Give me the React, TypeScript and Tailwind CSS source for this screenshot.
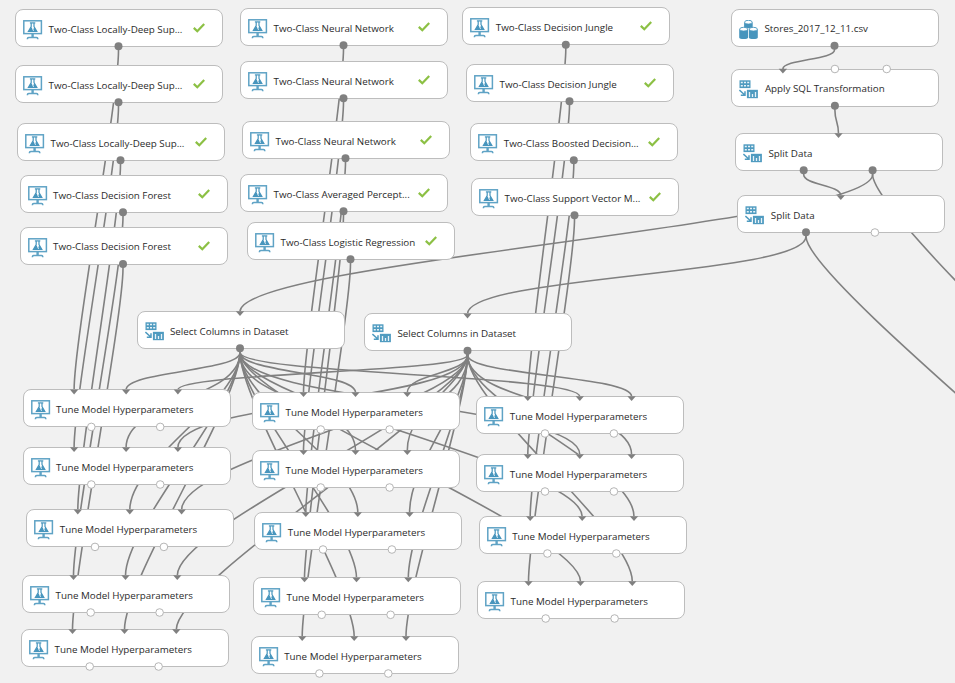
import React from 'react';

type Kind = 'model' | 'data' | 'transform';

interface NodeSpec {
  x: number;
  y: number;
  label: string;
  kind: Kind;
  checked?: boolean;
  dots?: number[];
  rings?: number[];
  topRings?: number[];
  arrows?: number[];
}

interface Edge {
  x1: number;
  y1: number;
  x2: number;
  y2: number;
}

const MID = 103.5;
const LEFT_IN = 51.5;
const RIGHT_IN = 155.3;
const LEFT_OUT = 68.7;
const RIGHT_OUT = 137.6;

const model = (x: number, y: number, label: string): NodeSpec => ({
  x, y, label, kind: 'model', checked: true, dots: [MID],
});

const tune = (x: number, y: number): NodeSpec => ({
  x, y, label: 'Tune Model Hyperparameters', kind: 'model',
  rings: [LEFT_OUT, RIGHT_OUT], arrows: [LEFT_IN, MID, RIGHT_IN],
});

const modelColumns: NodeSpec[][] = [
  [
    model(15, 9, 'Two-Class Locally-Deep Sup...'),
    model(15, 65, 'Two-Class Locally-Deep Sup...'),
    model(17, 123, 'Two-Class Locally-Deep Sup...'),
    model(19.5, 175, 'Two-Class Decision Forest'),
    model(19.5, 226.7, 'Two-Class Decision Forest'),
  ],
  [
    model(240, 8, 'Two-Class Neural Network'),
    model(240, 61, 'Two-Class Neural Network'),
    model(242, 121, 'Two-Class Neural Network'),
    model(240, 174, 'Two-Class Averaged Percept...'),
    model(247, 222, 'Two-Class Logistic Regression'),
  ],
  [
    model(462.3, 7.4, 'Two-Class Decision Jungle'),
    model(466, 64, 'Two-Class Decision Jungle'),
    model(470.3, 123, 'Two-Class Boosted Decision...'),
    model(471, 178, 'Two-Class Support Vector M...'),
  ],
];

const tuneColumns: NodeSpec[][] = [
  [tune(22.6, 389.4), tune(22.6, 447), tune(26.3, 509.4), tune(22, 575), tune(21, 629)],
  [tune(252, 392), tune(252, 450), tune(254.3, 512), tune(253, 577.3), tune(250.7, 636)],
  [tune(476.3, 396), tune(476.3, 454), tune(478.7, 516), tune(477, 581)],
];

const select1: NodeSpec = {
  x: 136.5, y: 311, label: 'Select Columns in Dataset', kind: 'transform', dots: [MID], arrows: [MID],
};
const select2: NodeSpec = {
  x: 364, y: 313.4, label: 'Select Columns in Dataset', kind: 'transform', dots: [MID], arrows: [MID],
};

const dataNodes: NodeSpec[] = [
  { x: 731, y: 8.5, label: 'Stores_2017_12_11.csv', kind: 'data', dots: [MID] },
  {
    x: 731.4, y: 68.5, label: 'Apply SQL Transformation', kind: 'transform',
    dots: [MID], arrows: [LEFT_IN], topRings: [MID, RIGHT_IN],
  },
  { x: 735, y: 133, label: 'Split Data', kind: 'transform', dots: [LEFT_OUT, RIGHT_OUT], arrows: [MID] },
  { x: 737.3, y: 195, label: 'Split Data', kind: 'transform', dots: [LEFT_OUT], rings: [RIGHT_OUT], arrows: [MID] },
];

const nodes: NodeSpec[] = [
  ...modelColumns.flat(),
  ...tuneColumns.flat(),
  select1,
  select2,
  ...dataNodes,
];

const link = (a: NodeSpec, out: number, b: NodeSpec, input: number): Edge => ({
  x1: a.x + out, y1: a.y + 37.5, x2: b.x + input, y2: b.y + 0.5,
});

const [csv, sql, split1, split2] = dataNodes;

const edges: Edge[] = [
  ...modelColumns.flatMap((column, c) => column.map((m, i) => link(m, MID, tuneColumns[c][i], LEFT_IN))),
  ...tuneColumns.flat().map((t) => link(select1, MID, t, MID)),
  ...tuneColumns.flat().map((t) => link(select2, MID, t, RIGHT_IN)),
  link(csv, MID, sql, LEFT_IN),
  link(sql, MID, split1, MID),
  link(split1, LEFT_OUT, split2, MID),
  link(split1, RIGHT_OUT, select1, MID),
  link(split2, LEFT_OUT, select2, MID),
  { x1: split1.x + RIGHT_OUT, y1: 170.5, x2: 1273, y2: 625 },
  { x1: split2.x + LEFT_OUT, y1: 232.5, x2: 1246, y2: 675 },
];

function edgePath({ x1, y1, x2, y2 }: Edge) {
  const start = y1 + 4;
  const bend = Math.min(50, (y2 - start) / 2);
  return `M${x1} ${y1}V${start}C${x1} ${start + bend} ${x2} ${y2 - bend} ${x2} ${y2}`;
}

function ModelIcon() {
  return (
    <svg className="block h-[20px] w-[20px]" viewBox="0 0 20 20" fill="none">
      <rect x="0.8" y="0.8" width="17.6" height="12.8" stroke="#5fa3c5" strokeWidth="1.5" />
      <path d="M9.6 14v3.6" stroke="#5fa3c5" strokeWidth="2.4" />
      <path d="M4.4 19.2v-.5q0-1.1 1.4-1.1h7.6q1.4 0 1.4 1.1v.5" stroke="#5fa3c5" strokeWidth="1.5" />
      <path d="M6.9 2.9h5.4" stroke="#4795bd" strokeWidth="1.2" />
      <path d="M8.2 3v3.6L5.4 11.4h8.4L11 6.6V3" stroke="#4795bd" strokeWidth="1.2" />
      <path d="M7.7 7.6 5.6 11.5h4.6L8.8 7.6zM11.3 7.2l2.4 4.2h-2.4l-1-2.2z" fill="#4795bd" />
    </svg>
  );
}

function TransformIcon() {
  return (
    <svg className="block h-[20px] w-[20px]" viewBox="0 0 20 20" fill="none">
      <rect x="0.5" y="0.3" width="11" height="7.8" fill="#4f9bc0" />
      <path d="M1.8 2.4h2M5 2.4h2M8.2 2.4h2M1.8 5.8h2M5 5.8h2M8.2 5.8h2" stroke="#e7f2f8" strokeWidth="1.5" />
      <path d="M0.4 10 5.5 14.8M6 11.3v3.9H1.8" stroke="#4f9bc0" strokeWidth="1.5" />
      <rect x="7.9" y="9.8" width="11" height="8.4" fill="#4f9bc0" />
      <path d="M10.5 12v4.9M13.5 14v2.9M16.5 12v4.9" stroke="#e7f2f8" strokeWidth="1.3" />
    </svg>
  );
}

function DataIcon() {
  return (
    <svg className="block h-[20px] w-[20px]" viewBox="0 0 20 20">
      <path d="M5.1 2.4v4.4c0 2 8.6 2 8.6 0V2.4z" fill="#4795bd" />
      <ellipse cx="9.4" cy="2.2" rx="3.8" ry="1.9" fill="#fff" stroke="#4795bd" strokeWidth="0.9" />
      <path d="M.2 9.2v8.2c0 2 8.9 2 8.9 0V9.2z" fill="#4795bd" />
      <ellipse cx="4.65" cy="9.2" rx="4" ry="1.9" fill="#fff" stroke="#4795bd" strokeWidth="0.9" />
      <path d="M9.9 9.2v8.2c0 2 8.9 2 8.9 0V9.2z" fill="#4795bd" />
      <ellipse cx="14.35" cy="9.2" rx="4" ry="1.9" fill="#fff" stroke="#4795bd" strokeWidth="0.9" />
    </svg>
  );
}

function CheckIcon() {
  return (
    <svg className="block h-[10px] w-[12px]" viewBox="0 0 12 10" fill="none">
      <path d="M.8 4.9 4.3 8.3 11.2.9" stroke="#8cc044" strokeWidth="2.2" />
    </svg>
  );
}

function NodeCard({ node }: { node: NodeSpec }) {
  return (
    <div
      className="absolute flex h-[38px] w-[208px] items-start rounded-[8px] border border-[#bdbdbd] bg-white pl-[7px]"
      style={{ left: node.x, top: node.y }}
    >
      <div className="mt-[10px] w-[25.5px] shrink-0">
        {node.kind === 'model' && <ModelIcon />}
        {node.kind === 'transform' && <TransformIcon />}
        {node.kind === 'data' && <DataIcon />}
      </div>
      <span className="mt-[11.6px] w-[144.5px] shrink-0 whitespace-nowrap text-[9.8px] leading-[16px] text-[#2b2b2b]">
        {node.label}
      </span>
      {node.checked && (
        <div className="mt-[13px]">
          <CheckIcon />
        </div>
      )}
    </div>
  );
}

function Ports({ node }: { node: NodeSpec }) {
  const { x, y } = node;
  return (
    <g>
      {node.arrows?.map((dx) => (
        <path key={dx} d={`M${x + dx - 4.2} ${y + 0.2}h8.4l-4.2 4.8z`} fill="#808080" />
      ))}
      {node.dots?.map((dx) => (
        <circle key={dx} cx={x + dx} cy={y + 37.3} r="4" fill="#808080" />
      ))}
      {node.rings?.map((dx) => (
        <circle key={dx} cx={x + dx} cy={y + 37.5} r="3.8" fill="#fff" stroke="#b5b5b5" />
      ))}
      {node.topRings?.map((dx) => (
        <circle key={dx} cx={x + dx} cy={y + 0.5} r="3.8" fill="#fff" stroke="#b5b5b5" />
      ))}
    </g>
  );
}

export default function App() {
  return (
    <div className="relative h-[683px] w-[955px] overflow-hidden bg-[#f1f1f1] font-['Open_Sans','Noto_Sans',sans-serif]">
      <svg className="absolute inset-0" width="955" height="683" fill="none">
        {edges.map((edge, i) => (
          <path key={i} d={edgePath(edge)} stroke="#808080" strokeWidth="1.6" />
        ))}
      </svg>
      {nodes.map((node, i) => (
        <NodeCard key={i} node={node} />
      ))}
      <svg className="pointer-events-none absolute inset-0" width="955" height="683">
        {nodes.map((node, i) => (
          <Ports key={i} node={node} />
        ))}
      </svg>
    </div>
  );
}
